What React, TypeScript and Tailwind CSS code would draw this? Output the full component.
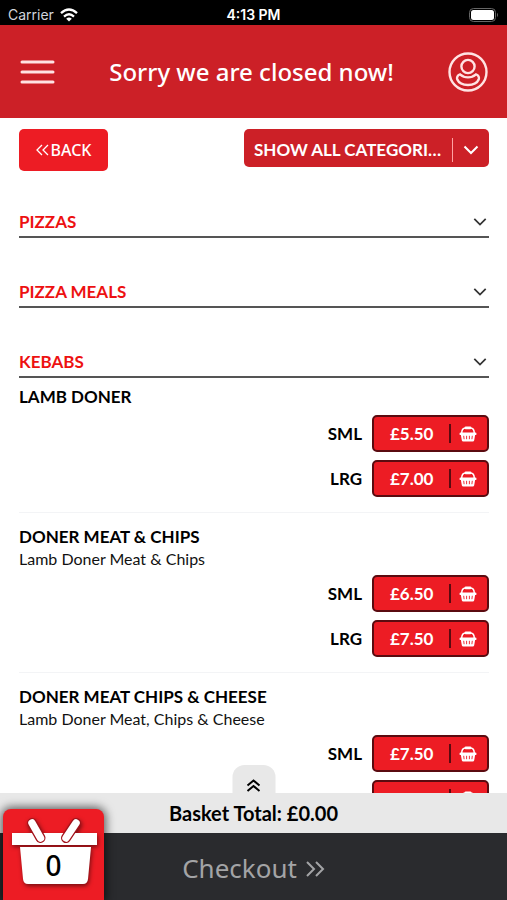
import { useState } from 'react';

type Price = { size: string; price: string };
type Item = { name: string; description?: string; prices: Price[] };

const kebabs: Item[] = [
  {
    name: 'LAMB DONER',
    prices: [
      { size: 'SML', price: '£5.50' },
      { size: 'LRG', price: '£7.00' },
    ],
  },
  {
    name: 'DONER MEAT & CHIPS',
    description: 'Lamb Doner Meat & Chips',
    prices: [
      { size: 'SML', price: '£6.50' },
      { size: 'LRG', price: '£7.50' },
    ],
  },
  {
    name: 'DONER MEAT CHIPS & CHEESE',
    description: 'Lamb Doner Meat, Chips & Cheese',
    prices: [
      { size: 'SML', price: '£7.50' },
      { size: 'LRG', price: '£8.50' },
    ],
  },
];

const ChevronDown = ({ className }: { className: string }) => (
  <svg viewBox="0 0 16 10" fill="none" stroke="currentColor" strokeWidth="2" className={className}>
    <path d="M1.5 1.5 8 8l6.500-6.500" />
  </svg>
);

const SmallBasket = () => (
  <svg viewBox="0 0 18 16" className="h-4 w-[18px]" fill="none">
    <path d="M2.700 7.500C2.700 3.800 4.300 2 6.500 2H11.500C13.700 2 15.300 3.800 15.300 7.500" stroke="#fff" strokeWidth="1.500" />
    <rect x="5.500" y="0.500" width="7" height="2.800" rx="1.400" fill="#fff" />
    <rect x="0.500" y="6.500" width="17" height="2.600" rx="1.200" fill="#fff" />
    <path d="M1.800 8.500H16.200L15.200 14.200Q15 15.500 13.700 15.500H4.300Q3 15.500 2.800 14.200Z" fill="#fff" />
    <path d="M4.700 9.800 5.100 13.200M7.600 9.800V13.200M10.400 9.800V13.200M13.300 9.800 12.900 13.200" stroke="#ed1c24" strokeWidth="0.900" />
  </svg>
);

const StatusBar = () => (
  <div className="grid h-[25px] shrink-0 grid-cols-3 items-center bg-black px-2 pt-1 font-['Inter',sans-serif] text-sm text-white">
    <div className="flex items-center gap-1.5 text-gray-300">
      <span className="font-normal">Carrier</span>
      <svg viewBox="0 0 18 14" className="h-3.5 w-[18px]" fill="none" stroke="#fff" strokeWidth="2.300">
        <path d="M1 5.200Q9-2.200 17 5.200" />
        <path d="M4 8.600Q9 4 14 8.600" />
        <path d="M9 13.600 6.200 10.700Q9 8.500 11.800 10.700Z" fill="#fff" stroke="none" />
      </svg>
    </div>
    <span className="text-center font-semibold">4:13 PM</span>
    <svg viewBox="0 0 30 14" className="h-3.5 w-[30px] justify-self-end" fill="none">
      <rect x="0.500" y="0.500" width="26" height="13" rx="4" stroke="#666" />
      <rect x="2" y="2" width="23" height="10" rx="2.500" fill="#fff" />
      <path d="M28 4.800Q30 7 28 9.200Z" fill="#666" />
    </svg>
  </div>
);

const Header = () => (
  <header className="flex h-[93px] shrink-0 items-center justify-between bg-[#cc2027] px-[19px] text-white">
    <button type="button" aria-label="Menu" className="w-9">
      <svg viewBox="0 0 36 26" className="h-[26px] w-9" stroke="#ffe3e3" strokeWidth="3" strokeLinecap="round">
        <path d="M3 3H34M3 13H34M3 23H34" />
      </svg>
    </button>
    <h1 className="font-['Noto_Sans',sans-serif] text-2xl font-medium">Sorry we are closed now!</h1>
    <button type="button" aria-label="Account">
      <svg viewBox="0 0 40 40" className="size-10" fill="none" stroke="#ffe3e3" strokeWidth="2.400">
        <circle cx="20" cy="20" r="18.500" />
        <circle cx="20" cy="14.500" r="6.600" />
        <path d="M12 22.400C9.500 23 8.500 25.500 9.300 27.600C11 31.500 15 33 20 33S29 31.500 30.700 27.600C31.500 25.500 30.500 23 28 22.400C25.500 24.600 23 25.400 20 25.400S14.500 24.600 12 22.400Z" />
      </svg>
    </button>
  </header>
);

const CategoryRow = ({ name }: { name: string }) => (
  <h2 className="border-b-2 border-[#555] text-[#ed1111]">
    <button type="button" className="flex h-7 w-full items-center justify-between text-left">
      {name}
      <ChevronDown className="mr-0.5 h-2.5 w-3.5 text-[#333]" />
    </button>
  </h2>
);

const MenuItem = ({ item }: { item: Item }) => (
  <li className="border-b border-gray-100 pt-3 pb-[15px] first:pt-[7px]">
    <h3 className="leading-6">{item.name}</h3>
    {item.description && <p className="text-base leading-5 font-normal text-[#111]">{item.description}</p>}
    <div className="mt-1.5 flex flex-col gap-2">
      {item.prices.map((p) => (
        <div key={p.size} className="flex items-center justify-end gap-2.5">
          <span>{p.size}</span>
          <button
            type="button"
            className="flex h-[37px] w-[117px] items-center justify-between rounded-[5px] border-2 border-[#5a0b10] bg-[#ed1c24] pr-2.5 pl-4 text-white"
          >
            {p.price}
            <span className="flex items-center gap-2">
              <span className="h-[19px] w-0.5 bg-[#5a0b10]" />
              <SmallBasket />
            </span>
          </button>
        </div>
      ))}
    </div>
  </li>
);

const BasketBadge = ({ count }: { count: number }) => (
  <button
    type="button"
    aria-label="Basket"
    className="absolute bottom-0 left-[3px] h-[91px] w-[101px] rounded-t-lg bg-[#ed1c24] shadow-[0_0_10px_2px_rgba(0,0,0,0.6)]"
  >
    <svg viewBox="0 0 101 91" className="h-full w-full drop-shadow-[1px_2px_2px_rgba(0,0,0,0.5)]">
      <path d="M9 24H94V36H9Z" fill="#fff" />
      <path d="M17 38H88L85 70Q84.500 75 80 75H25Q20.500 75 20 70Z" fill="#fff" />
      <path d="M29 14 37.500 29M73 14 63 29" stroke="#a3121a" strokeWidth="10" strokeLinecap="round" />
      <path d="M29 14 37.500 29M73 14 63 29" stroke="#fff" strokeWidth="7.500" strokeLinecap="round" />
    </svg>
    <span className="absolute inset-x-0 top-[38px] text-center font-['Noto_Sans',sans-serif] text-[28px] leading-9 font-medium text-black">
      {count}
    </span>
  </button>
);

const App = () => {
  const [category, setCategory] = useState('all');

  return (
    <div className="flex h-screen flex-col bg-white font-['Lato',sans-serif] text-[17px] font-bold text-black">
      <StatusBar />
      <Header />

      <main className="min-h-0 flex-1 overflow-y-auto pt-[11px] pr-[18px] pl-[19px] [scrollbar-width:none]">
        <div className="flex items-start justify-between">
          <button
            type="button"
            className="flex h-[42px] w-[89px] items-center justify-center gap-0.5 rounded-[5px] bg-[#ed1c24] font-['Noto_Sans',sans-serif] text-base font-medium text-white"
          >
            <svg viewBox="0 0 13 12" className="h-3 w-[13px]" fill="none" stroke="currentColor" strokeWidth="1.300">
              <path d="M6 1 1 6l5 5M12 1 7 6l5 5" />
            </svg>
            BACK
          </button>

          <div className="relative flex items-center text-white">
            <select
              aria-label="Category"
              value={category}
              onChange={(e) => setCategory(e.target.value)}
              className="h-[38px] w-[245px] appearance-none truncate rounded-[5px] bg-[#cc2027] pt-1 pr-[46px] pl-2.5"
            >
              <option value="all">SHOW ALL CATEGORIES</option>
              <option value="pizzas">PIZZAS</option>
              <option value="pizza-meals">PIZZA MEALS</option>
              <option value="kebabs">KEBABS</option>
            </select>
            <span className="pointer-events-none absolute right-2.5 flex items-center gap-2.5 pt-1">
              <span className="h-6 w-px bg-red-300" />
              <ChevronDown className="h-2.5 w-4" />
            </span>
          </div>
        </div>

        <div className="mt-[37px] flex flex-col gap-10">
          <CategoryRow name="PIZZAS" />
          <CategoryRow name="PIZZA MEALS" />
          <section>
            <CategoryRow name="KEBABS" />
            <ul>
              {kebabs.map((item) => (
                <MenuItem key={item.name} item={item} />
              ))}
            </ul>
          </section>
        </div>
      </main>

      <footer className="relative shrink-0">
        <button
          type="button"
          aria-label="Show basket"
          className="absolute -top-7 left-1/2 flex h-7 w-[43px] -translate-x-1/2 items-center justify-center rounded-t-xl bg-[#e8e8e8] pt-3"
        >
          <svg viewBox="0 0 14 13" className="h-[13px] w-3.5" fill="none" stroke="#000" strokeWidth="2">
            <path d="M1 6.500 7 1.500l6 5M1 12 7 7l6 5" />
          </svg>
        </button>
        <p className="flex h-10 items-center justify-center bg-[#e8e8e8] text-xl">Basket Total: £0.00</p>
        <button
          type="button"
          className="flex h-[67px] w-full items-center justify-center gap-2 bg-[#2a2b2e] pt-1 font-['Noto_Sans',sans-serif] text-[26px] font-normal text-[#a3a4a6]"
        >
          Checkout
          <svg viewBox="0 0 20 16" className="h-4 w-5" fill="none" stroke="currentColor" strokeWidth="2">
            <path d="M2 1 9 8l-7 7M11 1l7 7-7 7" />
          </svg>
        </button>
        <BasketBadge count={0} />
      </footer>
    </div>
  );
};

export default App;
